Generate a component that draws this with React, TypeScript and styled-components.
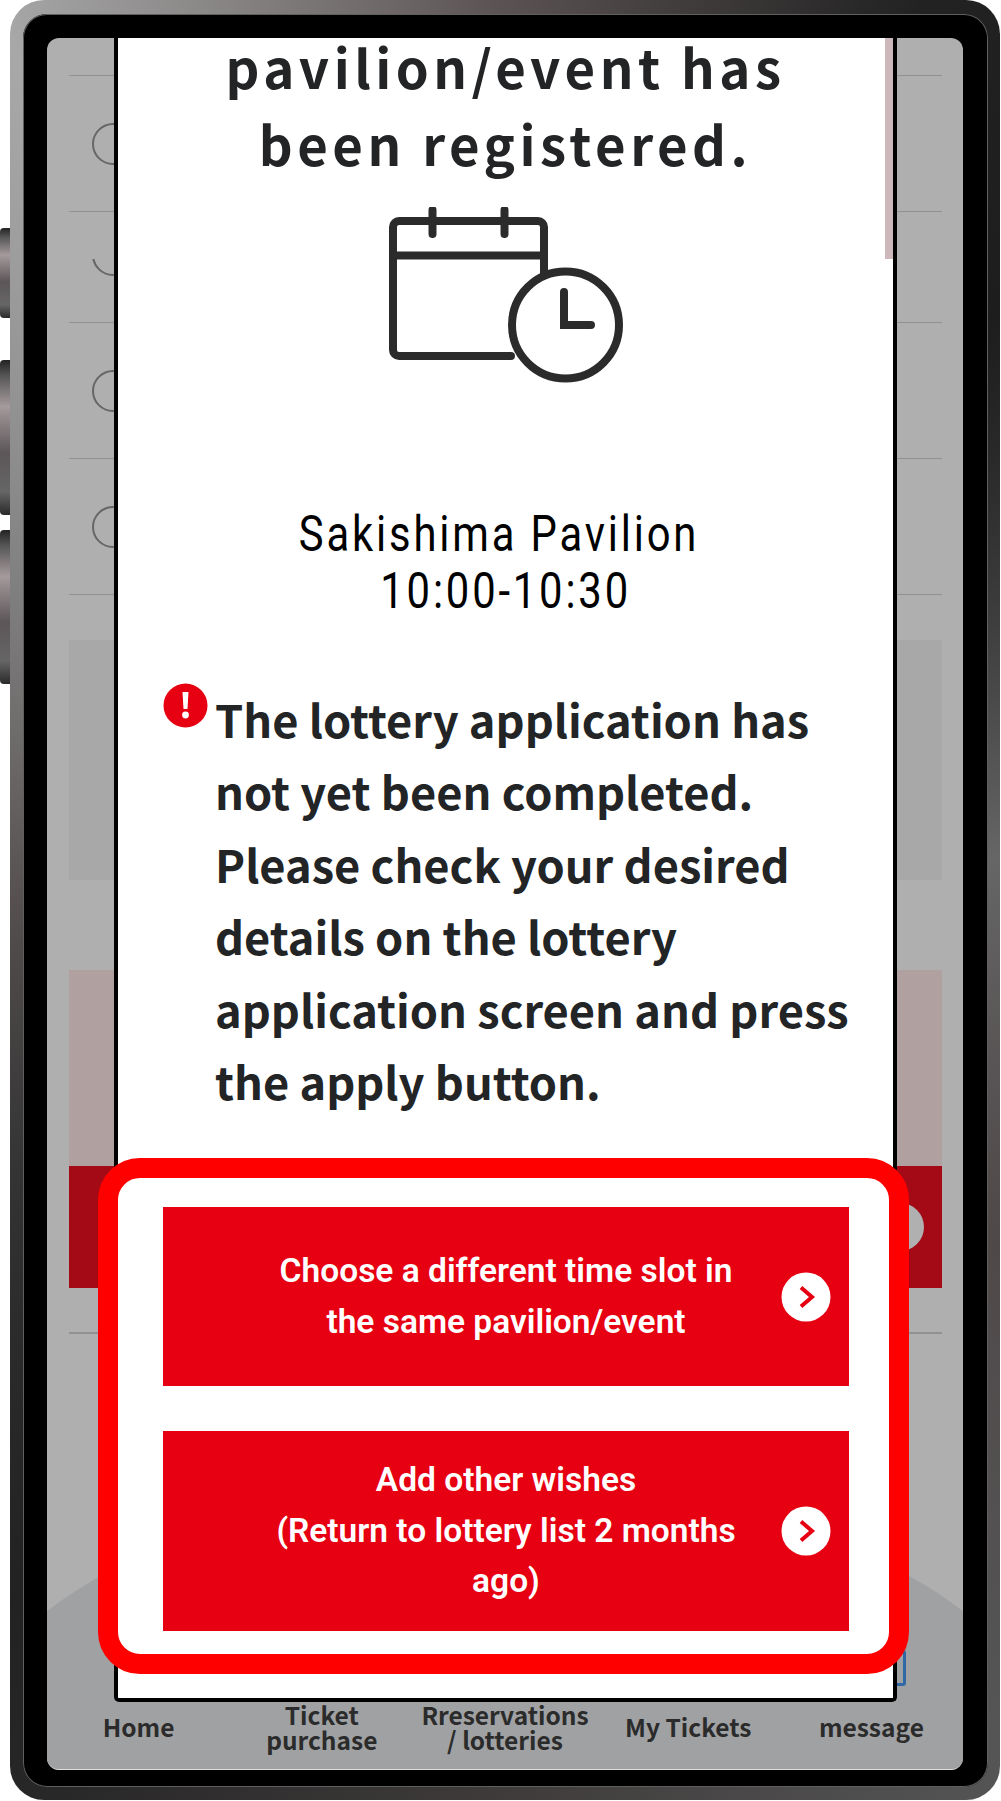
import React from "react";
import styled, { createGlobalStyle } from "styled-components";

const GlobalStyle = createGlobalStyle`
  html, body {
    margin: 0;
    padding: 0;
    background: #fff;
  }
  * {
    box-sizing: border-box;
  }
`;

const Device = styled.div`
  display: flex;
  width: 1001px;
  height: 1801px;
`;

const SideButtons = styled.div`
  width: 10px;
  flex: none;
  padding-top: 228px;
  display: flex;
  flex-direction: column;
`;

const SideKey = styled.div<{ $height: number; $gap: number }>`
  height: ${(p) => p.$height}px;
  margin-bottom: ${(p) => p.$gap}px;
  border-radius: 4px 0 0 4px;
  background: linear-gradient(180deg, #222 0%, #555 10%, #a59a9c 30%, #5c5658 60%, #666 85%, #2a2a2a 100%);
`;

const Bezel = styled.div`
  width: 990px;
  height: 1800px;
  padding: 14px 12px 13px 13px;
  border-radius: 34px;
  background: conic-gradient(
    #5a5252 0deg,
    #222 25deg,
    #1d1d1d 40deg,
    #666 85deg,
    #4f4849 125deg,
    #555 150deg,
    #3f3b3b 180deg,
    #222 215deg,
    #333 240deg,
    #565050 270deg,
    #8a8a8a 310deg,
    #a8a8a8 330deg,
    #5a5252 360deg
  );
`;

const Glass = styled.div`
  height: 100%;
  padding: 24px 25px 17px 24px;
  border-radius: 24px;
  background: #000;
  box-shadow: inset 0 0 0 1px #5f5f5f;
`;

const Screen = styled.div`
  position: relative;
  height: 100%;
  overflow: hidden;
  border-radius: 12px;
  background: #afafaf;
  border-bottom: 1px solid #e0e0e0;
`;

const BackPage = styled.div`
  display: flex;
  flex-direction: column;
  padding: 0 21px 0 22px;
`;

const ListRow = styled.div<{ $height: number }>`
  height: ${(p) => p.$height}px;
  display: flex;
  align-items: center;
  padding-left: 23px;
  border-bottom: 1.5px solid #919191;
`;

const Radio = styled.div`
  width: 42px;
  height: 42px;
  flex: none;
  border: 2px solid #666;
  border-radius: 50%;
`;

const ClippedRadio = styled.div`
  width: 42px;
  height: 17px;
  overflow: hidden;
  flex: none;
  display: flex;
  align-items: flex-end;
`;

const GreyBlock = styled.div`
  height: 240px;
  margin-top: 45px;
  background: #a8a8a8;
`;

const PinkBlock = styled.div`
  height: 196px;
  margin-top: 90px;
  background: #b0a0a0;
`;

const DarkRedBar = styled.div`
  height: 122px;
  display: flex;
  align-items: center;
  justify-content: flex-end;
  padding: 0 18px 0 0;
  background: #a30a15;
`;

const DimCircle = styled.div`
  width: 48px;
  height: 48px;
  border-radius: 50%;
  background: #b0b0b0;
`;

const LastLine = styled.div`
  height: 1.5px;
  margin-top: 44px;
  background: #919191;
`;

const TabArch = styled.div`
  position: absolute;
  left: -92px;
  width: 1100px;
  bottom: 0;
  height: 281px;
  border-radius: 550px 550px 0 0 / 290px 290px 0 0;
  background: #a0a1a3;
`;

const TabBar = styled.div`
  position: absolute;
  left: 0;
  right: 0;
  bottom: 0;
  height: 68px;
  display: grid;
  grid-template-columns: repeat(5, 1fr);
  align-items: center;
`;

const Tab = styled.div`
  font-family: "Noto Sans CJK JP", "Noto Sans", sans-serif;
  font-weight: 700;
  font-size: 24.5px;
  line-height: 25px;
  color: #2b2b2b;
  text-align: center;
  white-space: pre-line;
  padding-bottom: 17px;
`;

const MessageEdge = styled.div`
  position: absolute;
  left: 840px;
  top: 1612px;
  width: 19px;
  height: 36px;
  border: 3px solid #2f68a5;
  border-radius: 3px;
`;

const Modal = styled.div`
  position: absolute;
  left: 67px;
  top: 0;
  width: 783px;
  height: 1664px;
  display: flex;
  flex-direction: column;
  align-items: center;
  border: 4px solid #000;
  border-top: 0;
  border-radius: 0 0 5px 5px;
  background: #fff;
`;

const ScrollThumb = styled.div`
  position: absolute;
  top: 0;
  right: 0;
  width: 8px;
  height: 221px;
  background: #cdb9bb;
`;

const Heading = styled.h2`
  margin: -10px 0 0;
  font-family: "Noto Sans CJK JP", "Noto Sans", sans-serif;
  font-weight: 700;
  font-size: 52.7px;
  line-height: 77px;
  letter-spacing: 4.5px;
  color: #222426;
  text-align: center;
`;

const Illustration = styled.svg`
  display: block;
  margin-top: 25px;
  margin-left: 2px;
`;

const PlaceName = styled.div`
  margin-top: 119px;
  font-family: Roboto, "Liberation Sans", sans-serif;
  font-size: 50px;
  line-height: 57px;
  letter-spacing: 3.4px;
  color: #000;
  text-align: center;
  white-space: nowrap;
  transform: scaleX(0.835);
`;

const Notice = styled.div`
  align-self: stretch;
  display: flex;
  align-items: flex-start;
  margin-top: 63px;
  padding: 0 40px 0 45px;
`;

const NoticeMark = styled.svg`
  flex: none;
  display: block;
  margin-right: 7px;
`;

const NoticeText = styled.p`
  margin: 0;
  font-family: "Noto Sans CJK JP", "Noto Sans", sans-serif;
  font-weight: 700;
  font-size: 45.2px;
  line-height: 72.4px;
  color: #222426;
`;

const Highlight = styled.div`
  position: absolute;
  left: 51px;
  top: 1120px;
  width: 811px;
  height: 516px;
  display: flex;
  flex-direction: column;
  gap: 45px;
  padding: 29px 40px 0 45px;
  border: 20px solid #ff0000;
  border-radius: 42px;
  background: #fff;
`;

const ActionButton = styled.button<{ $height: number }>`
  position: relative;
  width: 686px;
  height: ${(p) => p.$height}px;
  flex: none;
  padding: 0 104px;
  border: 0;
  background: #e60012;
  font-family: Roboto, "Liberation Sans", sans-serif;
  font-weight: 600;
  font-size: 33.5px;
  line-height: 50.5px;
  color: #fff;
  text-align: center;
`;

const ArrowBadge = styled.svg`
  position: absolute;
  right: 18px;
  top: 50%;
  margin-top: -25px;
`;

function Arrow() {
  return (
    <ArrowBadge width="50" height="50" viewBox="0 0 50 50">
      <circle cx="25" cy="25" r="24.5" fill="#fff" />
      <polyline points="20,15.5 31,25 20,34.5" fill="none" stroke="#e60012" strokeWidth="4" />
    </ArrowBadge>
  );
}

export default function App() {
  return (
    <>
      <GlobalStyle />
      <Device>
        <SideButtons>
          <SideKey $height={90} $gap={42} />
          <SideKey $height={155} $gap={15} />
          <SideKey $height={154} $gap={0} />
        </SideButtons>
        <Bezel>
          <Glass>
            <Screen>
              <BackPage>
                <ListRow $height={38} />
                <ListRow $height={136}>
                  <Radio />
                </ListRow>
                <ListRow $height={111}>
                  <ClippedRadio>
                    <Radio />
                  </ClippedRadio>
                </ListRow>
                <ListRow $height={136}>
                  <Radio />
                </ListRow>
                <ListRow $height={136}>
                  <Radio />
                </ListRow>
                <GreyBlock />
                <PinkBlock />
                <DarkRedBar>
                  <DimCircle />
                </DarkRedBar>
                <LastLine />
              </BackPage>

              <TabArch />
              <MessageEdge />
              <TabBar>
                <Tab>Home</Tab>
                <Tab>{"Ticket\npurchase"}</Tab>
                <Tab>{"Rreservations\n/ lotteries"}</Tab>
                <Tab>My Tickets</Tab>
                <Tab>message</Tab>
              </TabBar>

              <Modal>
                <ScrollThumb />
                <Heading>
                  pavilion/event has
                  <br />
                  been registered.
                </Heading>
                <Illustration width="236" height="180" viewBox="0 0 236 180" fill="none" stroke="#2b2b2b" strokeWidth="8" strokeLinecap="round">
                  <path d="M122 149H10a6 6 0 0 1-6-6V20a6 6 0 0 1 6-6h139a6 6 0 0 1 6 6v48" />
                  <path d="M4 48.5h151" />
                  <path d="M43.5 3v24M115.5 3v24" />
                  <circle cx="176.5" cy="118" r="53.5" fill="#fff" />
                  <path d="M175 85v33h27" />
                </Illustration>
                <PlaceName>
                  Sakishima Pavilion&nbsp;
                  <br />
                  10:00-10:30
                </PlaceName>
                <Notice>
                  <NoticeMark width="45" height="45" viewBox="0 0 45 45">
                    <circle cx="22.5" cy="22.5" r="22" fill="#e60012" />
                    <path d="M19.5 9h6l-1 17h-4z" fill="#fff" />
                    <circle cx="22.5" cy="32" r="3.4" fill="#fff" />
                  </NoticeMark>
                  <NoticeText>
                    The lottery application has not yet been completed. Please check your desired details on the lottery application screen and press the apply button.
                  </NoticeText>
                </Notice>
              </Modal>

              <Highlight>
                <ActionButton $height={179}>
                  Choose a different time slot in the same pavilion/event
                  <Arrow />
                </ActionButton>
                <ActionButton $height={200}>
                  Add other wishes
                  <br />
                  (Return to lottery list 2 months ago)
                  <Arrow />
                </ActionButton>
              </Highlight>
            </Screen>
          </Glass>
        </Bezel>
      </Device>
    </>
  );
}
